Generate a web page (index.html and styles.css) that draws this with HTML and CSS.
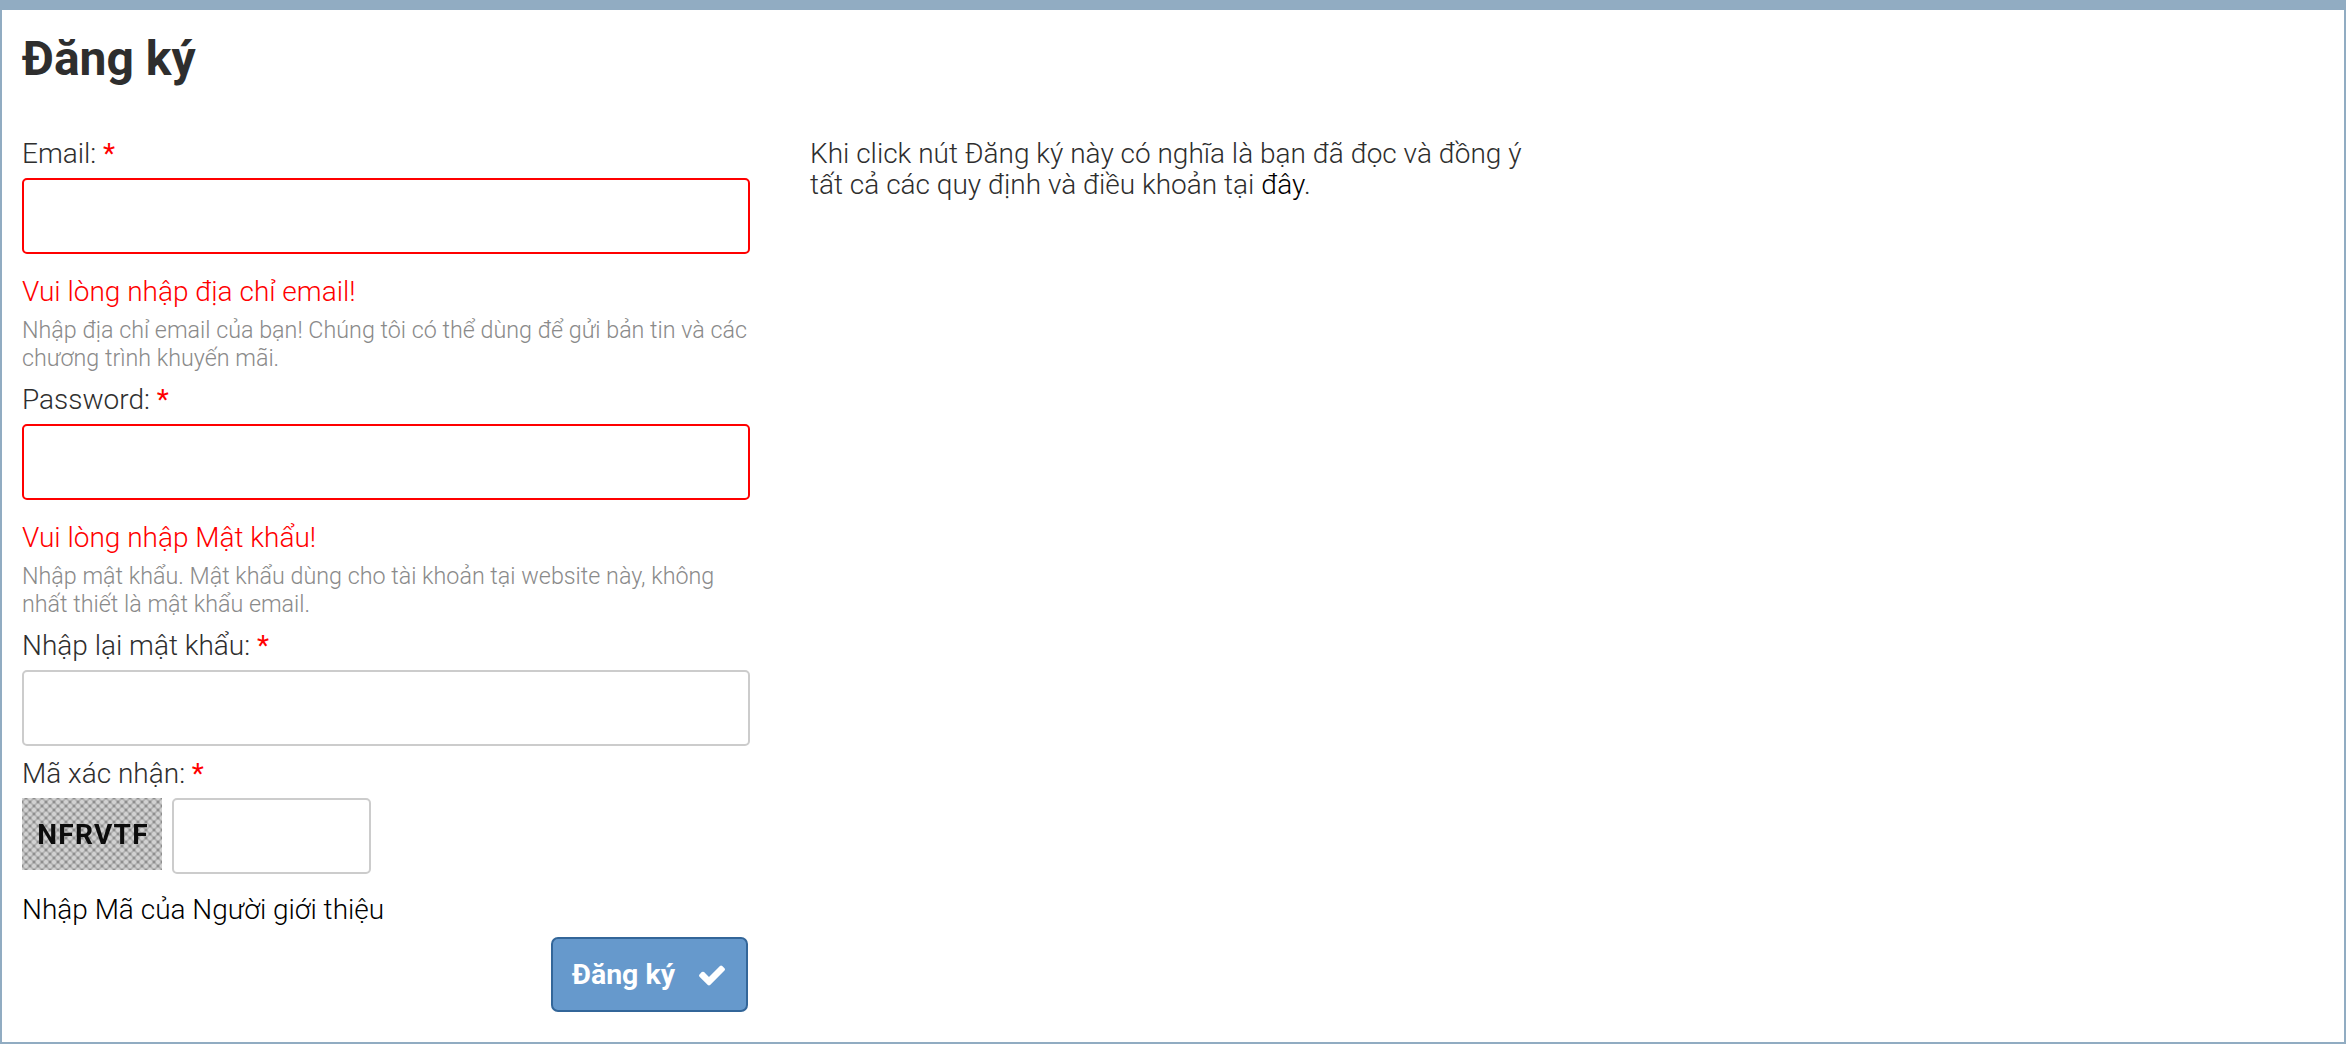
FILE: index.html
```html
<!DOCTYPE html>
<html lang="vi">
<head>
<meta charset="UTF-8" />
<meta name="viewport" content="width=device-width, initial-scale=1.0" />
<title>Đăng ký</title>
<link rel="stylesheet" href="styles.css">
</head>
<body>
  <div class="panel">
    <h1>Đăng ký</h1>
    <div class="columns">
      <form class="signup">
        <div class="field">
          <label for="email">Email: <span class="req">*</span></label>
          <input type="text" id="email" class="invalid" />
          <div class="error">Vui lòng nhập địa chỉ email!</div>
          <p class="hint">Nhập địa chỉ email của bạn! Chúng tôi có thể dùng để gửi bản tin và các chương trình khuyến mãi.</p>
        </div>
        <div class="field">
          <label for="pass">Password: <span class="req">*</span></label>
          <input type="password" id="pass" class="invalid" />
          <div class="error">Vui lòng nhập Mật khẩu!</div>
          <p class="hint">Nhập mật khẩu. Mật khẩu dùng cho tài khoản tại website này, không nhất thiết là mật khẩu email.</p>
        </div>
        <div class="field">
          <label for="pass2">Nhập lại mật khẩu: <span class="req">*</span></label>
          <input type="password" id="pass2" />
        </div>
        <div class="field">
          <label for="code">Mã xác nhận: <span class="req">*</span></label>
          <div class="captcha-row">
            <div class="captcha"><span>NFRVTF</span></div>
            <input type="text" id="code" class="captcha-input" />
          </div>
        </div>
        <div class="referral">Nhập Mã của Người giới thiệu</div>
        <div class="actions">
          <button type="button" class="btn">
            Đăng ký
            <!-- check icon -->
            <svg class="check" viewBox="0 0 1792 1792"><path d="M1671 566q0 40-28 68l-724 724-136 136q-28 28-68 28t-68-28l-136-136-362-362q-28-28-28-68t28-68l136-136q28-28 68-28t68 28l294 295 656-657q28-28 68-28t68 28l136 136q28 28 28 68z"/></svg>
          </button>
        </div>
      </form>
      <p class="terms">Khi click nút Đăng ký này có nghĩa là bạn đã đọc và đồng ý tất cả các quy định và điều khoản tại <a href="#">đây</a>.</p>
    </div>
  </div>
</body>
</html>
```

FILE: styles.css
```css
:root {
  --frame: #91acc2;
  --red: #ff0000;
  --text: #2e2e2e;
}
* { box-sizing: border-box; margin: 0; padding: 0; }
body { font-family: Roboto, sans-serif; font-weight: 300; color: var(--text); background: #ffffff; }
.panel {
  height: 1044px;
  border: 2px solid var(--frame);
  border-top-width: 10px;
  padding: 0 20px;
  overflow: hidden;
}
h1 { font-size: 48px; font-weight: 700; line-height: 56px; margin-top: 21px; }
.columns { display: flex; align-items: flex-start; gap: 60px; margin-top: 51px; }
.signup { width: 728px; flex: none; }
label { display: block; font-size: 28px; line-height: 31px; }
.req { color: var(--red); font-weight: 400; }
input {
  display: block;
  width: 100%;
  height: 76px;
  margin-top: 9px;
  border: 2px solid #cccccc;
  border-radius: 5px;
  background: #ffffff;
}
input.invalid { border-color: var(--red); }
.error { font-size: 28px; line-height: 32px; color: var(--red); margin-top: 22px; }
.hint { font-size: 23.3px; line-height: 28px; color: #8a8a8a; margin-top: 8px; }
.field + .field { margin-top: 12px; }
.captcha-row { display: flex; align-items: flex-start; gap: 10px; margin-top: 9px; }
.captcha {
  width: 140px;
  height: 72px;
  display: flex;
  align-items: center;
  justify-content: center;
  background-color: #8e8e8e;
  background-image:
    radial-gradient(circle at center, #d2d2d2 0, #d2d2d2 1.5px, transparent 3.5px),
    radial-gradient(circle at center, #d2d2d2 0, #d2d2d2 1.5px, transparent 3.5px);
  background-size: 8px 8px;
  background-position: 0 0, 4px 4px;
}
.captcha span {
  font-size: 28px;
  font-weight: 700;
  color: #0c0c0c;
  letter-spacing: 1.3px;
  margin-left: 2px;
  filter: blur(0.5px);
}
.captcha-input { width: 199px; margin-top: 0; }
.referral { font-size: 28px; line-height: 31px; color: #000000; margin-top: 20px; }
.actions { display: flex; justify-content: flex-end; padding-right: 2px; margin-top: 12px; }
.btn {
  width: 197px;
  height: 75px;
  display: flex;
  align-items: center;
  justify-content: center;
  gap: 22px;
  border: 2px solid #336699;
  border-radius: 7px;
  background: #6699cc;
  color: #ffffff;
  font-family: Roboto, sans-serif;
  font-size: 28.5px;
  font-weight: 700;
}
.check { width: 30px; height: 30px; fill: #ffffff; }
.terms { width: 720px; font-size: 28px; line-height: 31px; }
.terms a { color: #000000; text-decoration: none; }
```
